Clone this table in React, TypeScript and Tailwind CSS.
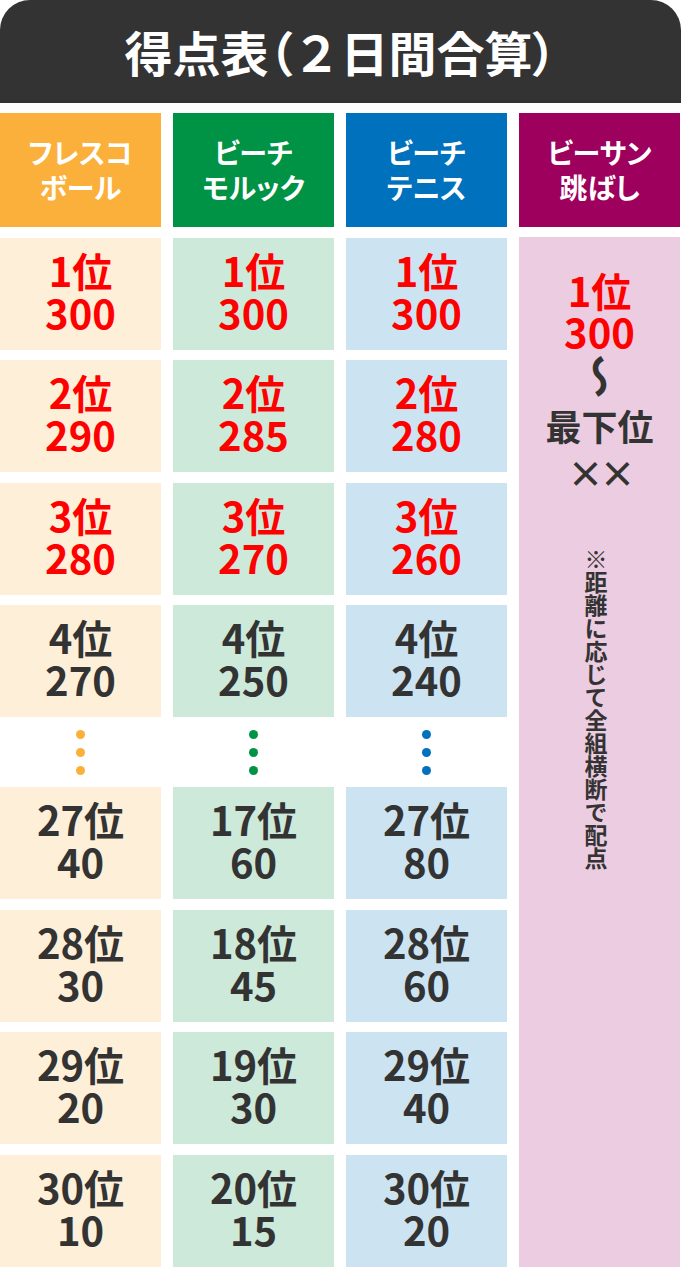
import React from "react";

type Col = {
  name: [string, string];
  head: string;
  cell: string;
  dot: string;
  top: [string, string][];
  bottom: [string, string][];
};

const cols: Col[] = [
  {
    name: ["フレスコ", "ボール"],
    head: "bg-[#fbb03b]",
    cell: "bg-[#feefd9]",
    dot: "bg-[#fbb03b]",
    top: [["1位", "300"], ["2位", "290"], ["3位", "280"], ["4位", "270"]],
    bottom: [["27位", "40"], ["28位", "30"], ["29位", "20"], ["30位", "10"]],
  },
  {
    name: ["ビーチ", "モルック"],
    head: "bg-[#009245]",
    cell: "bg-[#cce9da]",
    dot: "bg-[#009245]",
    top: [["1位", "300"], ["2位", "285"], ["3位", "270"], ["4位", "250"]],
    bottom: [["17位", "60"], ["18位", "45"], ["19位", "30"], ["20位", "15"]],
  },
  {
    name: ["ビーチ", "テニス"],
    head: "bg-[#0071bc]",
    cell: "bg-[#cce3f1]",
    dot: "bg-[#0071bc]",
    top: [["1位", "300"], ["2位", "280"], ["3位", "260"], ["4位", "240"]],
    bottom: [["27位", "80"], ["28位", "60"], ["29位", "40"], ["30位", "20"]],
  },
];

function HeadCell({ lines, bg }: { lines: [string, string]; bg: string }) {
  return (
    <div
      className={`${bg} h-[114px] flex flex-col items-center justify-center text-white font-bold text-[28px] leading-[35px] [font-feature-settings:'palt']`}
    >
      <span>{lines[0]}</span>
      <span>{lines[1]}</span>
    </div>
  );
}

function Cell({ rank, pts, bg, red }: { rank: string; pts: string; bg: string; red: boolean }) {
  return (
    <div
      className={`${bg} h-[112px] pb-[6px] flex flex-col items-center justify-center font-bold text-[40px] leading-[42px] [font-feature-settings:'palt'] ${
        red ? "text-[#ff0000]" : "text-[#333333]"
      }`}
    >
      <span>{rank}</span>
      <span>{pts}</span>
    </div>
  );
}

export default function App() {
  return (
    <div className="w-[681px] bg-white font-['Noto_Sans_CJK_JP','Noto_Sans',sans-serif]">
      {/* Title */}
      <div className="h-[103px] rounded-t-[30px] bg-[#333333] flex items-center justify-center">
        <h1 className="text-white font-bold text-[48px] leading-none pb-[2px]">
          得点表<span className="[font-feature-settings:'palt']">（</span>２日間合算<span className="[font-feature-settings:'palt']">）</span>
        </h1>
      </div>

      <div className="mt-[10px] flex gap-[12px]">
        {cols.map((c, ci) => (
          <div key={ci} className="w-[161px] flex flex-col gap-[10.5px]">
            <HeadCell lines={c.name} bg={c.head} />
            {c.top.map(([r, p], i) => (
              <Cell key={r} rank={r} pts={p} bg={c.cell} red={i < 3} />
            ))}
            <div className="h-[49px] flex flex-col items-center justify-center gap-[9px]">
              <span className={`w-[9px] h-[9px] rounded-full ${c.dot}`} />
              <span className={`w-[9px] h-[9px] rounded-full ${c.dot}`} />
              <span className={`w-[9px] h-[9px] rounded-full ${c.dot}`} />
            </div>
            {c.bottom.map(([r, p]) => (
              <Cell key={r} rank={r} pts={p} bg={c.cell} red={false} />
            ))}
          </div>
        ))}

        {/* Beach sandal toss */}
        <div className="w-[161px] flex flex-col gap-[10px]">
          <HeadCell lines={["ビーサン", "跳ばし"]} bg="bg-[#9e005d]" />
          <div className="flex-1 bg-[#ebcce0] flex flex-col items-center pt-[33px] font-bold text-[40px] leading-[41px] [font-feature-settings:'palt']">
            <span className="text-[#ff0000]">1位</span>
            <span className="text-[#ff0000]">300</span>
            <span className="text-[#333333] h-[48px] flex items-center justify-center">
              <span className="block text-[44px] leading-none [writing-mode:vertical-rl]">〜</span>
            </span>
            <span className="text-[#333333] mt-[5px] text-[36px] leading-[40px]">最下位</span>
            <span className="text-[#333333] mt-[7px] text-[36px] leading-[40px] tracking-[-4px]">××</span>
            <span className="text-[#333333] mt-[56px] mr-[8px] text-[23px] leading-[23px] [writing-mode:vertical-rl]">
              ※距離に応じて全組横断で配点
            </span>
          </div>
        </div>
      </div>
    </div>
  );
}
